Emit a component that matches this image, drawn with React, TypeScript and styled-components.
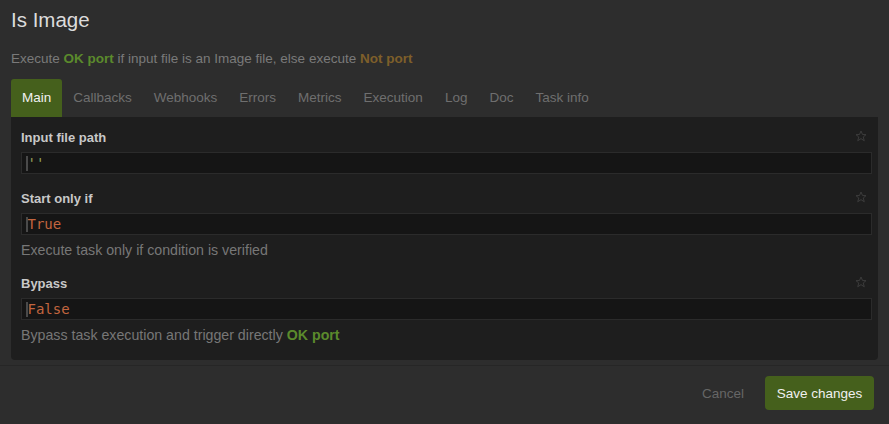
import styled, { createGlobalStyle } from 'styled-components'

const GlobalStyle = createGlobalStyle`
  html, body {
    margin: 0;
    padding: 0;
    background: #2d2d2d;
  }
  body {
    font-family: "Liberation Sans", Arial, sans-serif;
    font-size: 13px;
  }
`

const StyledPage = styled.div`
  width: 889px;
  height: 424px;
  display: flex;
  flex-direction: column;
  background: #2d2d2d;
  overflow: hidden;
`

const StyledBody = styled.div`
  padding: 0 11px;
  display: flex;
  flex-direction: column;
`

const StyledTitle = styled.h1`
  margin: 0;
  height: 40px;
  line-height: 40px;
  font-size: 20.5px;
  font-weight: 400;
  color: #dcdcdc;
`

const StyledDescription = styled.p`
  margin: 10px 0 0 0;
  line-height: 18px;
  font-size: 13.5px;
  color: #7a7a7a;
`

const StyledPort = styled.span<{ $kind: 'ok' | 'not' }>`
  font-weight: 700;
  color: ${(p) => (p.$kind === 'ok' ? '#5b8a2c' : '#7e5f2a')};
`

const StyledTabs = styled.div`
  margin-top: 11px;
  display: flex;
  height: 38px;
`

const StyledTab = styled.div<{ $active?: boolean }>`
  padding: 0 11px;
  line-height: 38px;
  font-size: 13.5px;
  border-radius: 3px 3px 0 0;
  color: ${(p) => (p.$active ? '#f0f0f0' : '#6f6f6f')};
  background: ${(p) => (p.$active ? '#45601c' : 'transparent')};
`

const StyledPanel = styled.div`
  width: 867px;
  box-sizing: border-box;
  background: #1e1e1e;
  border-radius: 0 0 4px 4px;
  padding: 11px 6px 16px 10px;
  display: flex;
  flex-direction: column;
  gap: 15px;
`

const StyledField = styled.div`
  display: flex;
  flex-direction: column;
`

const StyledLabelRow = styled.div`
  display: flex;
  justify-content: space-between;
  align-items: center;
  height: 18px;
  margin-bottom: 6px;
`

const StyledLabel = styled.label`
  color: #c8c8c8;
  font-weight: 700;
  font-size: 13px;
`

const StyledStar = styled.svg`
  width: 12px;
  height: 12px;
  margin-right: 5px;
  margin-top: -3px;
`

const StyledInput = styled.div`
  height: 22px;
  box-sizing: border-box;
  background: #151515;
  border: 1px solid #2b2b2b;
  display: flex;
  align-items: center;
  padding-left: 4px;
`

const StyledCaret = styled.span`
  width: 1.5px;
  height: 15px;
  background: #4a4a4a;
`

const StyledCode = styled.span<{ $tone: 'string' | 'bool' }>`
  font-family: "DejaVu Sans Mono", "Liberation Mono", monospace;
  font-size: 14px;
  color: ${(p) => (p.$tone === 'string' ? '#97a35a' : '#c2653f')};
`

const StyledHelp = styled.p`
  margin: 6px 0 0 0;
  line-height: 18px;
  font-size: 14.2px;
  color: #777;
`

const StyledFooter = styled.div`
  margin-top: 5px;
  border-top: 1px solid #262626;
  display: flex;
  justify-content: flex-end;
  align-items: center;
  gap: 21px;
  padding: 10px 15px 0 0;
`

const StyledCancel = styled.button`
  background: none;
  border: none;
  font: inherit;
  font-size: 13.5px;
  color: #666;
  padding: 0;
`

const StyledSave = styled.button`
  background: #45601c;
  border: none;
  border-radius: 4px;
  font: inherit;
  font-size: 13.5px;
  color: #f0f0f0;
  width: 109px;
  height: 34px;
  padding: 0;
`

const Star = () => (
  <StyledStar viewBox="0 0 24 24" fill="none" stroke="#3c3c3c" strokeWidth="2" strokeLinejoin="round">
    <polygon points="12,2 15,9 22,9.3 16.5,14 18.5,21.5 12,17.3 5.5,21.5 7.5,14 2,9.3 9,9" />
  </StyledStar>
)

const tabs = ['Main', 'Callbacks', 'Webhooks', 'Errors', 'Metrics', 'Execution', 'Log', 'Doc', 'Task info']

const App = () => {
  return (
    <StyledPage>
      <GlobalStyle />
      <StyledBody>
        <StyledTitle>Is Image</StyledTitle>
        <StyledDescription>
          Execute <StyledPort $kind="ok">OK port</StyledPort> if input file is an Image file, else execute{' '}
          <StyledPort $kind="not">Not port</StyledPort>
        </StyledDescription>
        <StyledTabs>
          {tabs.map((t) => (
            <StyledTab key={t} $active={t === 'Main'}>
              {t}
            </StyledTab>
          ))}
        </StyledTabs>
        <StyledPanel>
          <StyledField>
            <StyledLabelRow>
              <StyledLabel>Input file path</StyledLabel>
              <Star />
            </StyledLabelRow>
            <StyledInput>
              <StyledCaret />
              <StyledCode $tone="string">''</StyledCode>
            </StyledInput>
          </StyledField>
          <StyledField>
            <StyledLabelRow>
              <StyledLabel>Start only if</StyledLabel>
              <Star />
            </StyledLabelRow>
            <StyledInput>
              <StyledCaret />
              <StyledCode $tone="bool">True</StyledCode>
            </StyledInput>
            <StyledHelp>Execute task only if condition is verified</StyledHelp>
          </StyledField>
          <StyledField>
            <StyledLabelRow>
              <StyledLabel>Bypass</StyledLabel>
              <Star />
            </StyledLabelRow>
            <StyledInput>
              <StyledCaret />
              <StyledCode $tone="bool">False</StyledCode>
            </StyledInput>
            <StyledHelp>
              Bypass task execution and trigger directly <StyledPort $kind="ok">OK port</StyledPort>
            </StyledHelp>
          </StyledField>
        </StyledPanel>
      </StyledBody>
      <StyledFooter>
        <StyledCancel>Cancel</StyledCancel>
        <StyledSave>Save changes</StyledSave>
      </StyledFooter>
    </StyledPage>
  )
}

export default App
